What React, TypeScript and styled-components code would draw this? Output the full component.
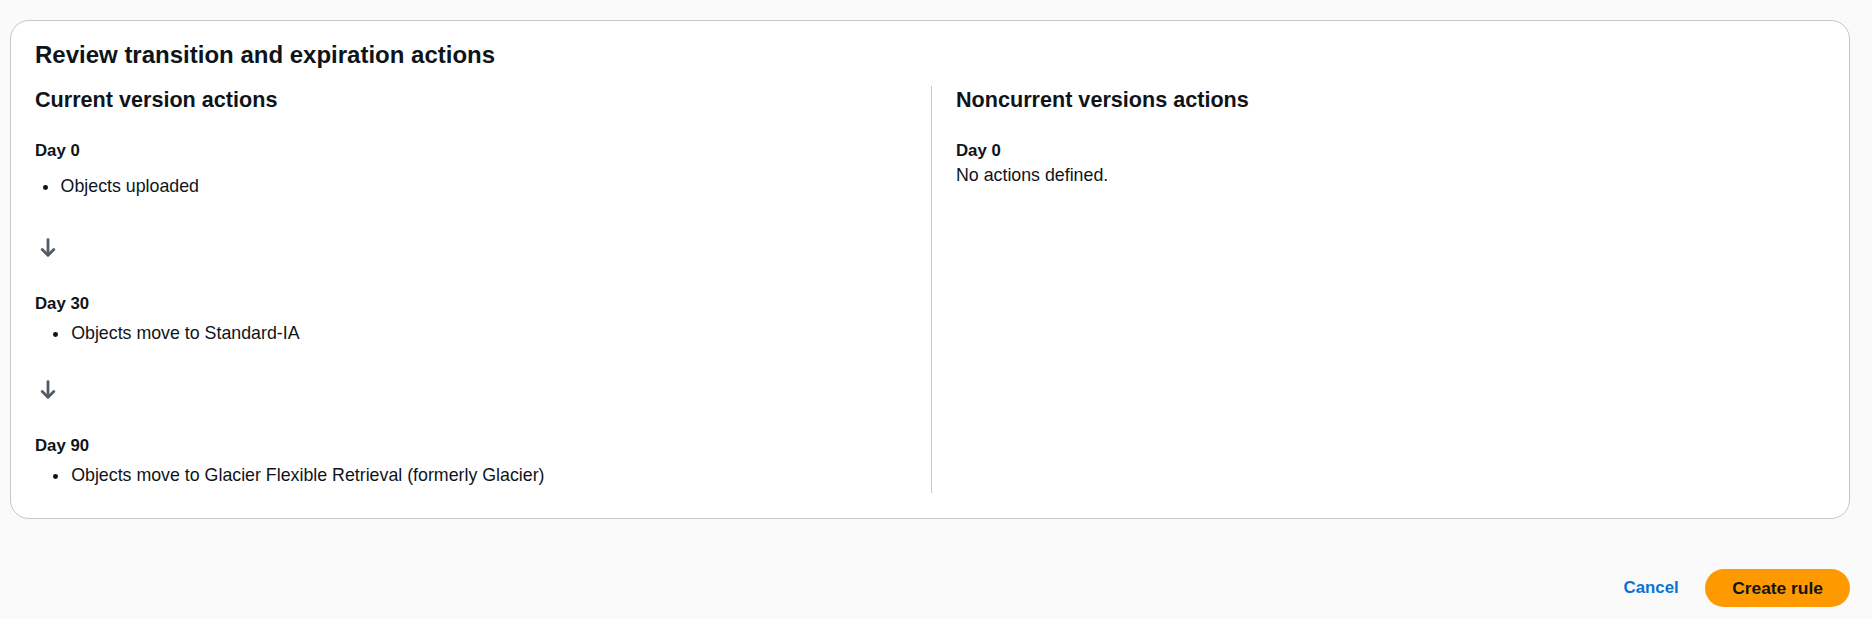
import React from "react";
import styled, { createGlobalStyle } from "styled-components";

const GlobalStyle = createGlobalStyle`
  html, body {
    margin: 0;
    padding: 0;
    background: #fafafa;
    color: #0f141a;
    font-family: "Liberation Sans", Arial, sans-serif;
  }
  * { box-sizing: border-box; }
`;

const Page = styled.div`
  padding: 20px 22px 0 10px;
`;

const Card = styled.section`
  background: #ffffff;
  border: 1px solid #c6c6cd;
  border-radius: 19px;
  padding: 20px 22px 24.5px 24px;
`;

const Title = styled.h2`
  margin: 0;
  font-size: 24px;
  line-height: 28px;
  font-weight: 700;
`;

const Columns = styled.div`
  display: grid;
  grid-template-columns: 1fr 1fr;
  margin-top: 17px;
`;

const Column = styled.div<{ $divider?: boolean }>`
  display: flex;
  flex-direction: column;
  padding: ${(p) => (p.$divider ? "0 0 6px 24px" : "0 24px 6px 0")};
  border-left: ${(p) => (p.$divider ? "1px solid #c6c6cd" : "none")};
`;

const ColumnTitle = styled.h3`
  margin: 0 0 25px;
  font-size: 21.6px;
  line-height: 28px;
  font-weight: 700;
`;

const StepBlock = styled.div<{ $lead?: boolean }>`
  display: flex;
  flex-direction: column;
  padding-bottom: ${(p) => (p.$lead ? "5px" : "0")};
`;

const DayLabel = styled.div`
  font-size: 16.8px;
  line-height: 24px;
  font-weight: 700;
`;

const BodyText = styled.div`
  font-size: 17.8px;
  line-height: 24px;
`;

const List = styled.ul<{ $lead?: boolean }>`
  list-style: none;
  margin: ${(p) => (p.$lead ? "11px" : "5px")} 0 0;
  padding: 0;
`;

const Item = styled.li`
  display: flex;
  align-items: flex-start;
  font-size: 17.8px;
  line-height: 24px;
`;

const Dot = styled.span<{ $lead?: boolean }>`
  flex: none;
  width: 4.8px;
  height: 4.8px;
  border-radius: 50%;
  background: #0f141a;
  margin: 11px 13px 0 ${(p) => (p.$lead ? "7.8px" : "18.4px")};
`;

const ArrowRow = styled.div`
  display: flex;
  padding: 34.5px 0 35.5px 5px;
  color: #545b64;
`;

const Footer = styled.div`
  display: flex;
  justify-content: flex-end;
  align-items: center;
  gap: 26.5px;
  margin-top: 50px;
`;

const LinkButton = styled.button`
  background: none;
  border: none;
  padding: 0;
  font-family: inherit;
  font-size: 16.8px;
  line-height: 24px;
  font-weight: 700;
  color: #0972d3;
  cursor: pointer;
`;

const PrimaryButton = styled.button`
  height: 38.5px;
  padding: 0 27px;
  border: none;
  border-radius: 20px;
  background: #ff9900;
  color: #0f141a;
  font-family: inherit;
  font-size: 17.4px;
  line-height: 38.5px;
  font-weight: 700;
  cursor: pointer;
`;

const ArrowDown = () => (
  <svg width="16" height="19" viewBox="0 0 16 19" fill="none" stroke="currentColor" strokeWidth="2.8" strokeLinecap="round" strokeLinejoin="round">
    <path d="M8 1.6v15.6" />
    <path d="M2.2 11.4l5.8 5.8 5.8-5.8" />
  </svg>
);

type Step = { day: string; items: string[] };

const steps: Step[] = [
  { day: "Day 0", items: ["Objects uploaded"] },
  { day: "Day 30", items: ["Objects move to Standard-IA"] },
  { day: "Day 90", items: ["Objects move to Glacier Flexible Retrieval (formerly Glacier)"] },
];

export default function App() {
  return (
    <>
      <GlobalStyle />
      <Page>
        <Card>
          <Title>Review transition and expiration actions</Title>
          <Columns>
            <Column>
              <ColumnTitle>Current version actions</ColumnTitle>
              {steps.map((s, i) => (
                <React.Fragment key={s.day}>
                  {i > 0 && (
                    <ArrowRow>
                      <ArrowDown />
                    </ArrowRow>
                  )}
                  <StepBlock $lead={i === 0}>
                    <DayLabel>{s.day}</DayLabel>
                    <List $lead={i === 0}>
                      {s.items.map((t) => (
                        <Item key={t}>
                          <Dot $lead={i === 0} />
                          {t}
                        </Item>
                      ))}
                    </List>
                  </StepBlock>
                </React.Fragment>
              ))}
            </Column>
            <Column $divider>
              <ColumnTitle>Noncurrent versions actions</ColumnTitle>
              <DayLabel>Day 0</DayLabel>
              <BodyText>No actions defined.</BodyText>
            </Column>
          </Columns>
        </Card>
        <Footer>
          <LinkButton>Cancel</LinkButton>
          <PrimaryButton>Create rule</PrimaryButton>
        </Footer>
      </Page>
    </>
  );
}
